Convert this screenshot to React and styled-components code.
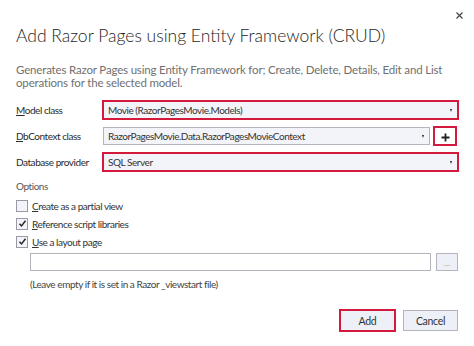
import React from "react";
import styled, { createGlobalStyle } from "styled-components";

const Global = createGlobalStyle`
  html, body { margin: 0; padding: 0; background: #ffffff; }
  body { font-family: "Lato", "Noto Sans", sans-serif; }
`;

const Dialog = styled.div`
  box-sizing: border-box;
  width: 474px;
  height: 346px;
  background: #ffffff;
  padding: 0 16px 0 16px;
  display: flex;
  flex-direction: column;
  color: #1e1e1e;
  position: relative;
`;

const Close = styled.svg`
  position: absolute;
  top: 12px;
  right: 11px;
`;

const Title = styled.h1`
  margin: 24px 0 0 0;
  font-family: "Lato", sans-serif;
  font-weight: 300;
  font-size: 17.5px;
  line-height: 24px;
  color: #1e1e1e;
`;

const Desc = styled.p`
  margin: 15px 0 0 0;
  font-size: 11.5px;
  line-height: 13px;
  color: #707070;
  letter-spacing: -0.17px;
`;

const Form = styled.div`
  margin-top: 12px;
  display: grid;
  grid-template-columns: 87px 1fr;
  row-gap: 8px;
  align-items: center;
`;

const Small = `
  font-size: 10px;
  letter-spacing: -0.45px;
`;

const Label = styled.div`
  ${Small}
  color: #2a2a2a;
`;

const FieldRow = styled.div`
  display: flex;
  gap: 4px;
  align-items: center;
`;

const Select = styled.div`
  box-sizing: border-box;
  flex: 1;
  height: 18px;
  border: 1px solid ${(p) => (p.$hl ? "#d41a3c" : "#b4b4bc")};
  outline: ${(p) => (p.$hl ? "2px solid #d41a3c" : "none")};
  outline-offset: -1px;
  background: #f3f4fa;
  display: flex;
  align-items: center;
  padding: 0 5px 0 4px;
  ${Small}
  color: #333;
  span { flex: 1; }
`;

const Arrow = styled.i`
  width: 0;
  height: 0;
  border-left: 1.5px solid transparent;
  border-right: 1.5px solid transparent;
  border-top: 3px solid #222;
`;

const SmallButton = styled.div`
  box-sizing: border-box;
  width: 22px;
  height: 18px;
  margin-right: ${(p) => p.$mr || 0}px;
  border: 1px solid ${(p) => (p.$hl ? "#d41a3c" : "#b4b4bc")};
  outline: ${(p) => (p.$hl ? "2px solid #d41a3c" : "none")};
  outline-offset: -1px;
  background: ${(p) => (p.$hl ? "#ffffff" : "#eef0f7")};
  display: flex;
  align-items: center;
  justify-content: center;
  font-size: 8px;
  color: #777;
  font-family: "Liberation Sans", sans-serif;
  padding-top: 2px;
`;

const Options = styled.div`
  margin-top: 9px;
  ${Small}
  line-height: 13px;
  color: #555;
`;

const CheckList = styled.div`
  margin-top: 6px;
  display: flex;
  flex-direction: column;
  gap: 5px;
`;

const CheckRow = styled.div`
  display: flex;
  align-items: center;
  gap: 4px;
  height: 13px;
  ${Small}
  color: #333;
`;

const Box = styled.span`
  box-sizing: border-box;
  width: 12px;
  height: 12px;
  border: 1px solid #9a9aa6;
  background: #f3f4fa;
  display: flex;
  align-items: center;
  justify-content: center;
`;

const LayoutRow = styled.div`
  margin: 5px 0 0 14px;
  display: flex;
  gap: 5px;
`;

const TextInput = styled.div`
  box-sizing: border-box;
  flex: 1;
  height: 18px;
  border: 1px solid #b4b4bc;
  background: #ffffff;
`;

const Hint = styled.div`
  margin: 7px 0 0 14px;
  ${Small}
  line-height: 13px;
  color: #444;
`;

const Footer = styled.div`
  margin-top: auto;
  margin-bottom: 15px;
  display: flex;
  justify-content: flex-end;
  gap: 8px;
`;

const Button = styled.div`
  box-sizing: border-box;
  width: 55px;
  height: 21px;
  border: 1px solid ${(p) => (p.$hl ? "#d41a3c" : "#b4b4bc")};
  outline: ${(p) => (p.$hl ? "2px solid #d41a3c" : "none")};
  outline-offset: -1px;
  background: #eef0f7;
  display: flex;
  align-items: center;
  justify-content: center;
  font-size: 10.5px;
  letter-spacing: -0.3px;
  color: #333;
`;

const Check = () => (
  <svg width="9" height="9" viewBox="0 0 9 9">
    <polyline points="1.5,4.8 3.5,7 7.5,1.8" fill="none" stroke="#222" strokeWidth="1.4" />
  </svg>
);

const Plus = () => (
  <svg width="9" height="9" viewBox="0 0 9 9">
    <path d="M4.5 0.5 V8.5 M0.5 4.5 H8.5" stroke="#222" strokeWidth="1.8" />
  </svg>
);

export default function App() {
  return (
    <>
      <Global />
      <Dialog>
        <Close width="7" height="7" viewBox="0 0 7 7">
          <path d="M0.5 0.5 L6.5 6.5 M6.5 0.5 L0.5 6.5" stroke="#444" strokeWidth="1.2" />
        </Close>
        <Title>Add Razor Pages using Entity Framework (CRUD)</Title>
        <Desc>
          Generates Razor Pages using Entity Framework for; Create, Delete, Details, Edit and List
          operations for the selected model.
        </Desc>
        <Form>
          <Label><u>M</u>odel class</Label>
          <FieldRow>
            <Select $hl><span>Movie (RazorPagesMovie.Models)</span><Arrow /></Select>
          </FieldRow>
          <Label><u>D</u>bContext class</Label>
          <FieldRow>
            <Select><span>RazorPagesMovie.Data.RazorPagesMovieContext</span><Arrow /></Select>
            <SmallButton $hl $mr={2}><Plus /></SmallButton>
          </FieldRow>
          <Label>Database provider</Label>
          <FieldRow>
            <Select $hl><span>SQL Server</span><Arrow /></Select>
          </FieldRow>
        </Form>
        <Options>Options</Options>
        <CheckList>
          <CheckRow><Box /><span><u>C</u>reate as a partial view</span></CheckRow>
          <CheckRow><Box><Check /></Box><span><u>R</u>eference script libraries</span></CheckRow>
          <CheckRow><Box><Check /></Box><span><u>U</u>se a layout page</span></CheckRow>
        </CheckList>
        <LayoutRow>
          <TextInput />
          <SmallButton>...</SmallButton>
        </LayoutRow>
        <Hint>(Leave empty if it is set in a Razor _viewstart file)</Hint>
        <Footer>
          <Button $hl>Add</Button>
          <Button>Cancel</Button>
        </Footer>
      </Dialog>
    </>
  );
}
